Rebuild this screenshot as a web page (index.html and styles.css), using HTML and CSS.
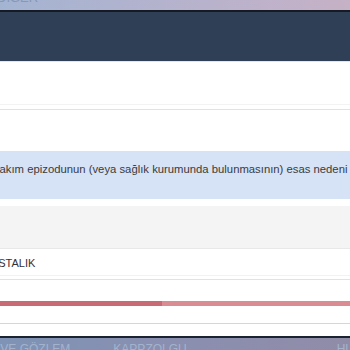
FILE: index.html
```html
<!DOCTYPE html>
<html lang="tr">
<head>
    <meta charset="UTF-8">
    <meta name="viewport" content="width=device-width, initial-scale=1.0">
    <title>Form</title>
    <link rel="stylesheet" href="styles.css">
</head>
<body>
    <div class="banner">
        <span class="banner-text">DİGER</span>
    </div>
    <div class="navbar"></div>
    <div class="page">
        <div class="section first"></div>
        <div class="section second"></div>
        <div class="question">Bakım epizodunun (veya sağlık kurumunda bulunmasının) esas nedeni</div>
        <div class="spacer"></div>
        <div class="answer-head"></div>
        <div class="answer">HASTALIK</div>
        <div class="answer-gap"></div>
        <div class="progress">
            <div class="progress-done"></div>
        </div>
        <div class="row-end"></div>
        <div class="row-tail"></div>
    </div>
    <div class="footer">
        <span class="footer-item">GÖZ VE GÖZLEM</span>
        <span class="footer-item">KAPPZOLGU</span>
        <span class="footer-item last">HUK</span>
    </div>
</body>
</html>
```

FILE: styles.css
```css
body{
    margin: 0;
    width: 350px;
    height: 350px;
    overflow: hidden;
    font-family: "Liberation Sans", Arial, sans-serif;
    background-color: #fff;
}

.banner{
    height: 10px;
    overflow: hidden;
    background: linear-gradient(90deg, #a3b4d2, #b9b2cc 60%, #c6b1c6);
    border-bottom: 2px solid #151a24;
}
.banner-text{
    display: block;
    margin-top: -9px;
    margin-left: -3px;
    font-size: 13px;
    line-height: 13px;
    color: #8797b5;
}

.navbar{
    height: 49px;
    background-color: #2f3f56;
    border-bottom: 1px solid #dfe6ee;
}

.section.first{
    height: 42px;
    border-bottom: 1px solid #f3f3f3;
}
.section.second{
    height: 41px;
    margin-top: 4px;
    border-top: 1px solid #e2e2e2;
}

.question{
    height: 48px;
    line-height: 36px;
    background-color: #d6e2f5;
    color: #3b3b3b;
    font-size: 11.3px;
    white-space: nowrap;
    overflow: hidden;
    text-indent: -8px;
}

.spacer{
    height: 7px;
}
.answer-head{
    height: 42px;
    background-color: #f4f4f4;
    border-bottom: 1px solid #e8e8e8;
}
.answer{
    height: 26px;
    line-height: 28px;
    font-size: 11px;
    color: #333;
    text-indent: -17px;
    overflow: hidden;
    border-bottom: 1px solid #f2f2f2;
}
.answer-gap{
    height: 21px;
    margin-top: 3px;
    border-top: 1px solid #e2e2e2;
}

.progress{
    height: 5px;
    background-color: #d98c92;
}
.progress-done{
    width: 162px;
    height: 100%;
    background-color: #c96b74;
}

.row-end{
    height: 17px;
    border-bottom: 1px solid #d6d6d6;
}
.row-tail{
    height: 12px;
    border-bottom: 2px solid #1b2230;
}

.footer{
    height: 12px;
    overflow: hidden;
    display: flex;
    gap: 43px;
    background: linear-gradient(90deg, #7e93b5, #8a8fb0 50%, #908ca8);
}
.footer-item{
    font-size: 12px;
    line-height: 12px;
    margin-top: 5px;
    color: #a3b3ce;
    white-space: nowrap;
}
.footer-item:first-child{
    margin-left: -29px;
}
.footer-item.last{
    margin-left: auto;
    margin-right: -12px;
}
```
